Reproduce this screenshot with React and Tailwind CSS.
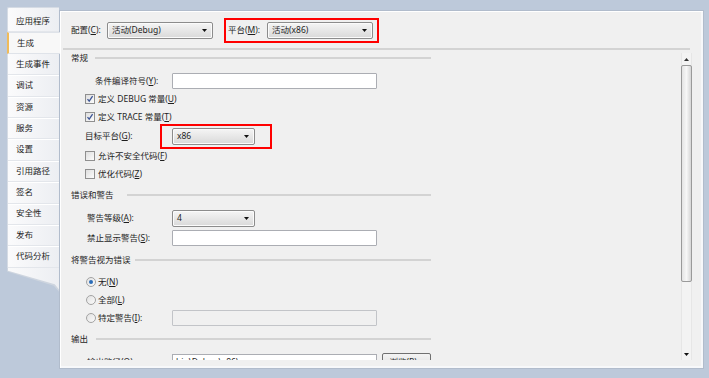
import React from "react";

const FONT = "[font-family:'Noto_Sans','Noto_Sans_CJK_SC',sans-serif]";

function Arrow() {
  return (
    <svg width="5" height="3" viewBox="0 0 5 3">
      <path d="M0 0H5L2.5 3Z" fill="#111" />
    </svg>
  );
}

function Dropdown({ w, text }) {
  return (
    <div
      className={`${w} h-[17px] rounded-[2px] border border-[#8c8c8c] bg-gradient-to-b from-[#f5f5f5] to-[#d9d9d9] flex items-center justify-between pl-[4px] pr-[5px] shadow-[inset_0_0_0_1px_#fbfbfb]`}
    >
      <span className="leading-none">{text}</span>
      <Arrow />
    </div>
  );
}

function M({ c }) {
  return <u className="underline underline-offset-[1px]">{c}</u>;
}

function Checkbox({ checked }) {
  return (
    <div className="w-[10px] h-[10px] border border-[#8f8f8f] bg-gradient-to-br from-[#dedede] to-[#fcfcfc] flex items-center justify-center shrink-0">
      {checked && (
        <svg width="8" height="8" viewBox="0 0 8 8">
          <path d="M1.5 4.2L3.2 6.2L6.6 1.2" stroke="#3d5596" strokeWidth="1.3" fill="none" />
        </svg>
      )}
    </div>
  );
}

function Radio({ checked }) {
  return (
    <div className="w-[10px] h-[10px] rounded-full border border-[#a3a3a3] bg-gradient-to-br from-[#e2e2e2] to-[#fafafa] flex items-center justify-center shrink-0">
      {checked && <div className="w-[4px] h-[4px] rounded-full bg-[#2a6cb8]" />}
    </div>
  );
}

function Input({ disabled }) {
  return (
    <div
      className={
        disabled
          ? "w-[205px] h-[16px] border border-[#c2c4c8] bg-[#f0f0f0] rounded-[1px]"
          : "w-[205px] h-[16px] border border-[#abadb3] bg-white rounded-[1px]"
      }
    />
  );
}

function Header({ labelW, children, mt }) {
  return (
    <div className={`flex items-center w-[360px] h-[18px] ${mt}`}>
      <span className={`${labelW} whitespace-nowrap leading-none`}>{children}</span>
      <div className="flex-1 h-[2px] bg-[#d3d3d3]" />
    </div>
  );
}

const tabs = ["应用程序", "生成", "生成事件", "调试", "资源", "服务", "设置", "引用路径", "签名", "安全性", "发布", "代码分析"];

export default function App() {
  return (
    <div className={`w-[709px] h-[378px] bg-[#bdc9da] overflow-hidden pt-[7px] pl-[7px] text-[8.5px] text-[#1e1e1e] ${FONT}`}>
      <div className="flex items-start">
        {/* tab strip */}
        <div className="relative z-10 w-[52px] flex flex-col">
          <div className="pt-[3px] bg-gradient-to-r from-[#fbfbfc] to-[#eceef2] rounded-tl-[2px] border-t border-l border-[#d5dbe4]">
            {tabs.map((t, i) =>
              i === 1 ? (
                <div
                  key={t}
                  className="w-[53px] h-[21.4px] -ml-px flex items-center pl-[8px] bg-[#f8f8f8] border-l-2 border-[#f0bb5a] border-y border-y-[#dfe3e9]"
                >
                  <span className="leading-none">{t}</span>
                </div>
              ) : (
                <div
                  key={t}
                  className="h-[21.4px] flex items-center pl-[8px] border-b border-[#e3e6eb] shadow-[0_1px_0_#ffffff]"
                >
                  <span className="leading-none">{t}</span>
                </div>
              )
            )}
          </div>
          <div className="h-[24px] w-[52px] bg-[#ced5df] [clip-path:polygon(0_0,100%_0,100%_100%,90%_75%,0_16%)]">
            <div className="h-[23px] w-[52px] bg-gradient-to-r from-[#fafafb] to-[#eceef2] [clip-path:polygon(0_0,100%_0,100%_100%,90%_72%,0_13%)] ml-px" />
          </div>
        </div>

        {/* main panel */}
        <div className="mt-[3px] w-[645px] border border-[#b1bccc] bg-[#f0f0f0] shadow-[inset_1px_1px_0_#ffffff,inset_-2px_-2px_0_#f7f8fa] flex flex-col">
          {/* config row */}
          <div className="flex items-center pl-[11px] pt-[7px] h-[32px] shrink-0">
            <span className="w-[36px] whitespace-nowrap leading-none">
              配置(<M c="C" />):
            </span>
            <Dropdown w="w-[106px]" text="活动(Debug)" />
            <div className="ml-[11px] w-[155px] h-[25px] border-2 border-[#ff0000] flex items-center pl-[2px]">
              <span className="w-[39px] whitespace-nowrap leading-none">
                平台(<M c="M" />):
              </span>
              <Dropdown w="w-[106px]" text="活动(x86)" />
            </div>
          </div>
          <div className="ml-[3px] mt-[5px] w-[627px] h-[2px] bg-[#d3d3d3] shrink-0" />

          {/* scroll area */}
          <div className="mt-[3px] h-[307px] flex overflow-hidden mb-[8px] shrink-0">
            <div className="flex-1 pl-[11px]">
              <div className="flex items-center w-[360px] h-[10px]">
                <span className="w-[24px] whitespace-nowrap leading-none">常规</span>
                <div className="flex-1 h-[2px] bg-[#d3d3d3]" />
              </div>

              <div className="flex items-center h-[18px] mt-[9px] ml-[24px]">
                <span className="w-[77px] whitespace-nowrap leading-none">
                  条件编译符号(<M c="Y" />):
                </span>
                <Input />
              </div>

              <div className="flex items-center h-[18px] ml-[14px] gap-[3px]">
                <Checkbox checked />
                <span className="whitespace-nowrap leading-none">
                  定义 DEBUG 常量(<M c="U" />)
                </span>
              </div>
              <div className="flex items-center h-[18px] ml-[14px] gap-[3px]">
                <Checkbox checked />
                <span className="whitespace-nowrap leading-none">
                  定义 TRACE 常量(<M c="T" />)
                </span>
              </div>

              <div className="flex items-center h-[18px] mt-[1px] ml-[14px]">
                <span className="w-[87px] whitespace-nowrap leading-none">
                  目标平台(<M c="G" />):
                </span>
                <div className="relative">
                  <Dropdown w="w-[83px]" text="x86" />
                  <div className="absolute left-[-12px] top-[-4px] w-[112px] h-[25px] border-2 border-[#ff0000]" />
                </div>
              </div>

              <div className="flex items-center h-[18px] mt-[2px] ml-[14px] gap-[3px]">
                <Checkbox />
                <span className="whitespace-nowrap leading-none">
                  允许不安全代码(<M c="F" />)
                </span>
              </div>
              <div className="flex items-center h-[18px] ml-[14px] gap-[3px]">
                <Checkbox />
                <span className="whitespace-nowrap leading-none">
                  优化代码(<M c="Z" />)
                </span>
              </div>

              <Header labelW="w-[56px]" mt="mt-[3px]">错误和警告</Header>

              <div className="flex items-center h-[18px] mt-[5px] ml-[16px]">
                <span className="w-[85px] whitespace-nowrap leading-none">
                  警告等级(<M c="A" />):
                </span>
                <Dropdown w="w-[83px]" text="4" />
              </div>
              <div className="flex items-center h-[18px] mt-[2px] ml-[16px]">
                <span className="w-[85px] whitespace-nowrap leading-none">
                  禁止显示警告(<M c="S" />):
                </span>
                <Input />
              </div>

              <Header labelW="w-[64px]" mt="mt-[4px]">将警告视为错误</Header>

              <div className="flex items-center h-[18px] mt-[4px] ml-[15px] gap-[2px]">
                <Radio checked />
                <span className="whitespace-nowrap leading-none">
                  无(<M c="N" />)
                </span>
              </div>
              <div className="flex items-center h-[18px] ml-[15px] gap-[2px]">
                <Radio />
                <span className="whitespace-nowrap leading-none">
                  全部(<M c="L" />)
                </span>
              </div>
              <div className="flex items-center h-[18px] ml-[15px]">
                <div className="w-[86px] flex items-center gap-[2px]">
                  <Radio />
                  <span className="whitespace-nowrap leading-none">
                    特定警告(<M c="I" />):
                  </span>
                </div>
                <Input disabled />
              </div>

              <Header labelW="w-[25px]" mt="mt-[3px]">输出</Header>

              <div className="flex items-center h-[18px] mt-[5px] ml-[16px]">
                <span className="w-[85px] whitespace-nowrap leading-none">
                  输出路径(<M c="O" />):
                </span>
                <div className="w-[205px] h-[16px] border border-[#abadb3] bg-white flex items-center pl-[3px]">
                  <span className="leading-none">bin\Debug\x86\</span>
                </div>
                <div className="ml-[5px] w-[49px] h-[18px] rounded-[2px] border border-[#707070] bg-gradient-to-b from-[#f3f3f3] to-[#dddddd] flex items-center justify-center">
                  <span className="leading-none">浏览(<M c="R" />)...</span>
                </div>
              </div>
            </div>

            {/* scrollbar */}
            <div className="w-[11px] mr-[11px] h-[307px] bg-[#f3f3f3] border-x border-[#e6e6e6] flex flex-col">
              <div className="h-[12px] flex items-center justify-center">
                <svg width="5" height="3" viewBox="0 0 5 3">
                  <path d="M0 3H5L2.5 0Z" fill="#333" />
                </svg>
              </div>
              <div className="h-[217px] mx-[-1px] rounded-[2px] border border-[#9a9a9a] bg-gradient-to-r from-[#e4e4e4] via-[#f7f7f7] to-[#d6d6d6]" />
              <div className="flex-1" />
              <div className="h-[12px] flex items-center justify-center">
                <Arrow />
              </div>
            </div>
          </div>
        </div>
      </div>
    </div>
  );
}
